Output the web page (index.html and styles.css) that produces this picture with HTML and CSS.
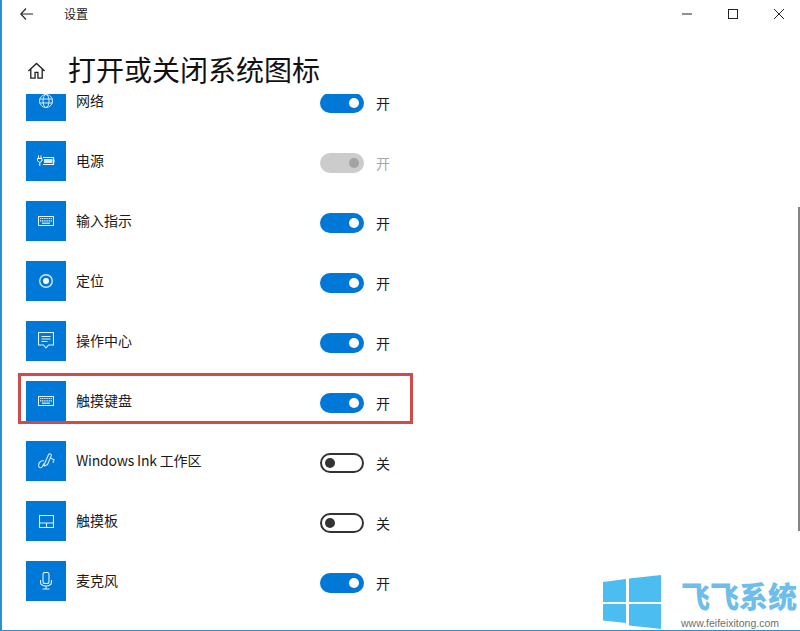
FILE: index.html
```html
<!DOCTYPE html>
<html lang="zh-CN">
<head>
<meta charset="utf-8">
<title>设置</title>
<link rel="stylesheet" href="styles.css">
</head>
<body>
<div class="window">
  <header class="titlebar">
    <svg class="back" width="13" height="12" viewBox="0 0 13 12"><path d="M6 .5.800 6 6 11.500M.8 6H13" fill="none" stroke="#222" stroke-width="1.100"/></svg>
    <span class="apptitle">设置</span>
    <div class="controls">
      <svg width="12" height="12" viewBox="0 0 12 12"><path d="M1 6h10" stroke="#222" stroke-width="1"/></svg>
      <svg width="12" height="12" viewBox="0 0 12 12"><rect x="1.500" y="1.500" width="9" height="9" fill="none" stroke="#222" stroke-width="1"/></svg>
      <svg width="12" height="12" viewBox="0 0 12 12"><path d="M1 1l10 10M11 1 1 11" stroke="#222" stroke-width="1"/></svg>
    </div>
  </header>
  <div class="pagehead">
    <svg class="home" width="19" height="20" viewBox="0 0 20 20"><path d="M1.500 10 10 2l8.500 8M4 8v9.500h4.500v-6h3v6H16V8" fill="none" stroke="#222" stroke-width="1.400"/></svg>
    <h1>打开或关闭系统图标</h1>
  </div>
  <div class="viewport">
    <ul class="list">
      <li class="row">
        <span class="tile"><svg width="16" height="16" viewBox="0 0 16 16" fill="none" stroke="#d6ecfb"><circle cx="8" cy="8" r="6.500"/><ellipse cx="8" cy="8" rx="3" ry="6.500"/><path d="M1.500 6h13M1.500 10h13"/></svg></span>
        <span class="name">网络</span>
        <span class="toggle on"><i></i></span><span class="state">开</span>
      </li>
      <li class="row">
        <span class="tile"><svg width="18" height="12" viewBox="0 0 18 12" fill="none" stroke="#fff"><path d="M6 2.500h10.500v7H6" stroke-width="1.200"/><path d="M7 4h8.500v4H7z" fill="#d6ecfb" stroke="none"/><path d="M16.500 4.500h1v3h-1z" fill="#fff" stroke="none"/><path d="M1.500.5v3M4 .5v3M.5 3.500h4.500v2.500L2.800 7.500.5 6zM2.800 7.500v3.500" stroke-width="1"/></svg></span>
        <span class="name">电源</span>
        <span class="toggle disabled"><i></i></span><span class="state muted">开</span>
      </li>
      <li class="row">
        <span class="tile"><svg width="16" height="10" viewBox="0 0 16 10"><use href="#keys"/></svg></span>
        <span class="name">输入指示</span>
        <span class="toggle on"><i></i></span><span class="state">开</span>
      </li>
      <li class="row">
        <span class="tile"><svg width="16" height="16" viewBox="0 0 16 16"><circle cx="8" cy="8" r="6.300" fill="none" stroke="#cfe8fb" stroke-width="1.400"/><circle cx="8" cy="8" r="3" fill="#fff"/></svg></span>
        <span class="name">定位</span>
        <span class="toggle on"><i></i></span><span class="state">开</span>
      </li>
      <li class="row">
        <span class="tile"><svg width="16" height="18" viewBox="0 0 16 18" fill="none" stroke="#e3f2fd" stroke-width="1.100"><path d="M.5.500h15v12.500h-5l-2.500 3-2.500-3h-5z"/><path d="M3.500 4.500h9M3.500 7h9M3.500 9.500h6"/></svg></span>
        <span class="name">操作中心</span>
        <span class="toggle on"><i></i></span><span class="state">开</span>
      </li>
      <li class="row">
        <span class="tile"><svg width="16" height="10" viewBox="0 0 16 10"><use href="#keys"/></svg></span>
        <span class="name">触摸键盘</span>
        <span class="toggle on"><i></i></span><span class="state">开</span>
      </li>
      <li class="row">
        <span class="tile"><svg width="17" height="16" viewBox="0 0 17 16" fill="none" stroke="#d6ecfb" stroke-width="1.100"><path d="M6 12 10.500 1.700c.6-1.500 3.200-.7 2.800.9L9.500 11.500 6.500 13zM12.500 5l3.500 1.800-1 3M6 8C3 7 .6 9.500.6 12.500c0 2.800 3 3 4 .8l1.200-2.800"/></svg></span>
        <span class="name tight">Windows Ink 工作区</span>
        <span class="toggle off"><i></i></span><span class="state">关</span>
      </li>
      <li class="row">
        <span class="tile"><svg width="15" height="13" viewBox="0 0 15 13" fill="none" stroke="#e3f2fd" stroke-width="1.100"><path d="M.5.500h14v12H.5zM.5 8h14M7.500 8v4.500"/></svg></span>
        <span class="name">触摸板</span>
        <span class="toggle off"><i></i></span><span class="state">关</span>
      </li>
      <li class="row">
        <span class="tile"><svg width="12" height="18" viewBox="0 0 12 18" fill="none" stroke="#e3f2fd" stroke-width="1.100"><rect x="3" y=".5" width="6" height="11" rx="2"/><path d="M.5 8v2c0 2.500 2 4 5.500 4s5.500-1.500 5.500-4V8M6 14v3M2.500 17h7"/></svg></span>
        <span class="name">麦克风</span>
        <span class="toggle on"><i></i></span><span class="state">开</span>
      </li>
    </ul>
  </div>
  <div class="scrollthumb"></div>
  <div class="highlight"></div>
  <div class="watermark">
    <svg width="60" height="54" viewBox="0 0 60 54"><path fill="#4cbdf0" d="M0 7 23 4v23H0zM26 3.500 58 0v27H26zM0 29h23v19L0 45.500zM26 29h32v25l-32-3.500z"/></svg>
    <div class="wm-text">
      <span class="wm-name">飞飞系统</span>
      <span class="wm-url">www.feifeixitong.com</span>
    </div>
  </div>
</div>
<svg class="defs" width="0" height="0">
  <defs>
    <g id="keys">
      <rect x=".5" y=".5" width="15" height="9" fill="none" stroke="#e3f2fd"/>
      <path d="M2 2.500h12M2 4.800h12" stroke="#e3f2fd" stroke-width="1.200" stroke-dasharray="1.200 .6"/>
      <path d="M4 7.200h8" stroke="#e3f2fd" stroke-width="1.200"/>
    </g>
  </defs>
</svg>
</body>
</html>
```
FILE: styles.css
```css
* { box-sizing: border-box; }
html, body { margin: 0; padding: 0; }
body {
  width: 800px;
  height: 631px;
  overflow: hidden;
  background: #fff;
  font-family: "Noto Sans CJK SC", "Liberation Sans", sans-serif;
  color: #1a1a1a;
}
.window {
  position: relative;
  width: 800px;
  height: 631px;
  border-left: 2px solid #2a8fd6;
  border-bottom: 1px solid #2a8fd6;
  display: flex;
  flex-direction: column;
  overflow: hidden;
}
.titlebar {
  flex: none;
  height: 30px;
  display: flex;
  align-items: center;
  padding-left: 18px;
}
.back { margin-top: -3px; }
.apptitle { margin-left: 31px; font-size: 12px; line-height: 16px; margin-top: -2px; }
.controls {
  margin-left: auto;
  display: flex;
  gap: 34px;
  padding-right: 15px;
  margin-top: -2px;
}
.pagehead {
  flex: none;
  height: 64px;
  display: flex;
  align-items: center;
  padding-left: 25px;
}
.home { margin-top: 18px; }
h1 {
  margin: 14px 0 0 22px;
  font-size: 28px;
  font-weight: 400;
  line-height: 40px;
  color: #111;
}
.viewport { flex: 1; overflow: hidden; }
.list {
  list-style: none;
  margin: -13px 0 0;
  padding: 0 0 0 24px;
}
.row {
  height: 60px;
  display: flex;
  align-items: flex-start;
}
.tile {
  flex: none;
  width: 40px;
  height: 40px;
  background: #0078d7;
  display: flex;
  align-items: center;
  justify-content: center;
}
.name {
  width: 244px;
  margin-left: 10px;
  margin-top: 9px;
  font-size: 14px;
  line-height: 20px;
}
.name.tight { letter-spacing: -0.2px; }
.toggle {
  flex: none;
  width: 44px;
  height: 20px;
  margin-top: 12px;
  border-radius: 10px;
  position: relative;
}
.toggle i {
  position: absolute;
  top: 5px;
  width: 10px;
  height: 10px;
  border-radius: 50%;
}
.toggle.on { background: #0078d7; }
.toggle.on i { right: 5px; background: #fff; }
.toggle.disabled { background: #ccc; }
.toggle.disabled i { right: 5px; background: #a3a3a3; }
.toggle.off { border: 2px solid #333; }
.toggle.off i { left: 3px; top: 3px; background: #333; }
.state {
  margin-left: 12px;
  margin-top: 12px;
  font-size: 14px;
  line-height: 20px;
}
.state.muted { color: #a8a8a8; }
.scrollthumb {
  position: absolute;
  right: 0;
  top: 207px;
  width: 2px;
  height: 324px;
  background: #858585;
}
.highlight {
  position: absolute;
  left: 16px;
  top: 373px;
  width: 395px;
  height: 51px;
  border: 3px solid #d24b4b;
}
.watermark {
  position: absolute;
  left: 601px;
  top: 575px;
  width: 197px;
  height: 55px;
  display: flex;
  background: #fff;
}
.watermark svg { flex: none; width: 60px; height: 54px; }
.wm-text {
  margin-left: 18px;
  display: flex;
  flex-direction: column;
}
.wm-name {
  font-size: 29px;
  line-height: 34px;
  font-weight: 900;
  color: #6fbdea;
  white-space: nowrap;
  margin-top: 3px;
}
.wm-url {
  font-family: "Liberation Sans", sans-serif;
  font-size: 10.500px;
  line-height: 12px;
  color: #6f6f6f;
  margin-top: 5px;
  white-space: nowrap;
}
.defs { position: absolute; }
```
